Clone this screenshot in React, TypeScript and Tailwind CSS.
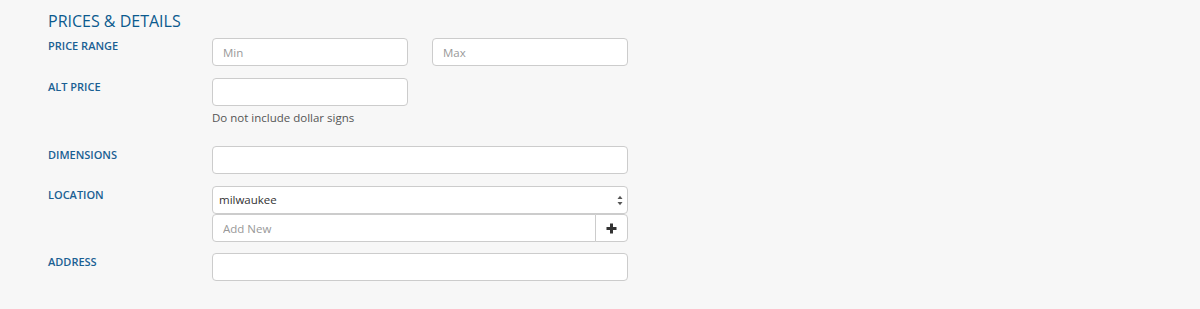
import React from "react";

const font = { fontFamily: '"Open Sans", "Noto Sans", sans-serif' };

function Label({ children }: { children: React.ReactNode }) {
  return (
    <div className="w-[164px] shrink-0 text-[11px] leading-[15px] font-semibold uppercase text-[#1a6093]">
      {children}
    </div>
  );
}

function TextInput({ placeholder, value, className = "" }: { placeholder?: string; value?: string; className?: string }) {
  return (
    <input
      type="text"
      readOnly
      placeholder={placeholder}
      defaultValue={value}
      className={`h-[28px] rounded-[4px] border border-[#cccccc] bg-white px-[10px] text-[11.5px] text-[#333] placeholder:text-[#999] outline-none ${className}`}
      style={font}
    />
  );
}

export default function App() {
  return (
    <div className="min-h-[309px] w-[1200px] bg-[#f7f7f7] pl-[48px]" style={font}>
      <div className="pt-[12px] text-[16px] leading-[18px] text-[#0b5a8e]">PRICES &amp; DETAILS</div>
      <div className="mt-[8px] flex flex-col">
        <div className="flex">
          <Label>PRICE RANGE</Label>
          <div className="flex gap-[24px]">
            <TextInput placeholder="Min" className="w-[196px]" />
            <TextInput placeholder="Max" className="w-[196px]" />
          </div>
        </div>
        <div className="mt-[12px] flex">
          <div className="pt-[1px]">
            <Label>ALT PRICE</Label>
          </div>
          <div className="flex flex-col">
            <TextInput className="w-[196px]" />
            <div className="mt-[3px] mb-[8px] text-[11.5px] leading-[17px] text-[#555]">Do not include dollar signs</div>
          </div>
        </div>
        <div className="mt-[12px] flex">
          <div className="pt-[1px]">
            <Label>DIMENSIONS</Label>
          </div>
          <TextInput className="w-[416px]" />
        </div>
        <div className="mt-[12px] flex">
          <div className="pt-[1px]">
            <Label>LOCATION</Label>
          </div>
          <div className="flex w-[416px] flex-col">
            <div className="relative flex h-[28px] items-center rounded-[4px] border border-[#cccccc] bg-white pl-[6px] text-[11.5px] text-[#333]">
              milwaukee
              <svg className="absolute right-[4px] top-[8px]" width="6" height="11" viewBox="0 0 6 11">
                <path d="M0.5 4 L3 0.8 L5.5 4 Z" fill="#555" />
                <path d="M0.5 7 L3 10.2 L5.5 7 Z" fill="#555" />
              </svg>
            </div>
            <div className="flex h-[28px]">
              <input
                type="text"
                readOnly
                placeholder="Add New"
                className="h-[28px] min-w-0 flex-1 rounded-l-[4px] border border-[#cccccc] bg-white px-[10px] text-[11.5px] text-[#333] placeholder:text-[#999] outline-none"
                style={font}
              />
              <div className="-ml-px flex h-[28px] w-[33px] items-center justify-center rounded-r-[4px] border border-[#cccccc] bg-white">
                <svg width="11" height="11" viewBox="0 0 11 11">
                  <path d="M4 0.5 H7 V4 H10.5 V7 H7 V10.5 H4 V7 H0.5 V4 H4 Z" fill="#333" />
                </svg>
              </div>
            </div>
          </div>
        </div>
        <div className="mt-[11px] flex">
          <div className="pt-[1px]">
            <Label>ADDRESS</Label>
          </div>
          <TextInput className="w-[416px]" />
        </div>
      </div>
    </div>
  );
}
